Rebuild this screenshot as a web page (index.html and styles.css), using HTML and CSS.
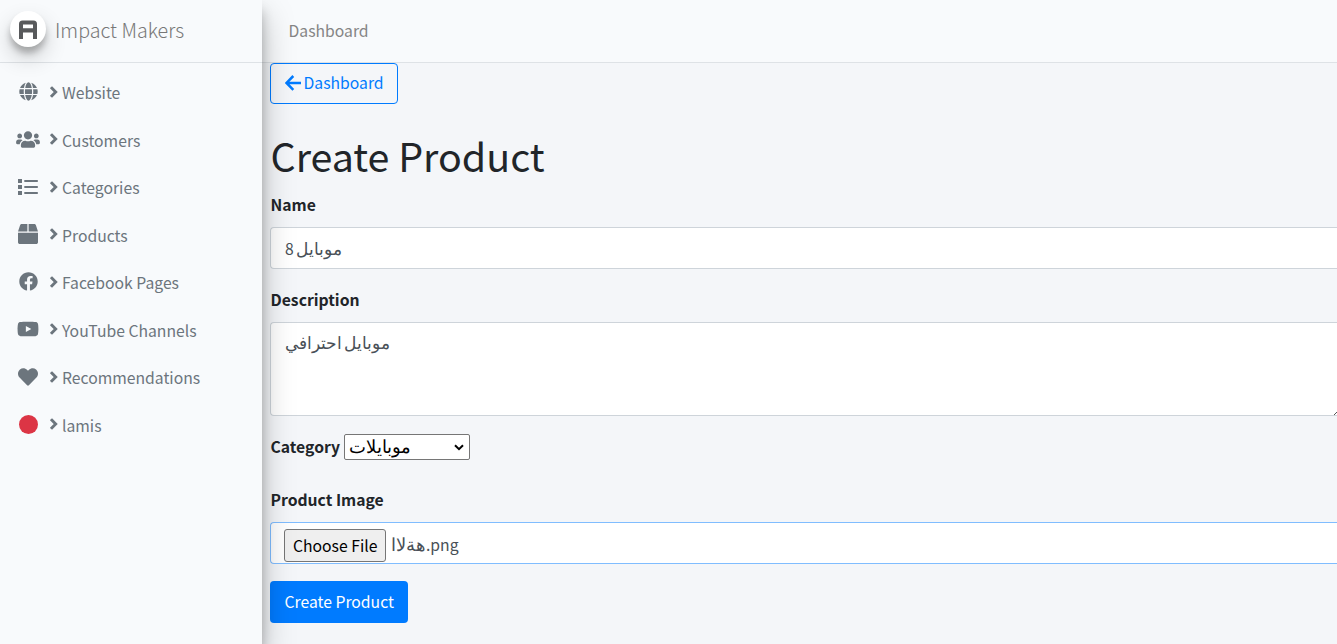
FILE: index.html
```html
<!DOCTYPE html>
<html lang="en">
<head>
<meta charset="utf-8">
<title>Create Product</title>
<link rel="stylesheet" href="styles.css">
</head>
<body>
<svg class="sprite" aria-hidden="true">
  <symbol id="chev" viewBox="0 0 8 14"><path d="M2 3.200 5.700 7 2 10.800" fill="none" stroke="currentColor" stroke-width="2.900" stroke-linecap="square"/></symbol>
</svg>
<div class="app">
  <aside class="sidebar">
    <a class="brand">
      <span class="logo"><svg viewBox="0 0 18 19"><path fill="#58595b" fill-rule="evenodd" d="M0 19V4Q0 .5 3.500 .5h11q3.500 0 3.500 3.500v15h-4v-6.500H4V19zM4 8.300h10V4.500H4z"/></svg></span>
      <span class="brand-name">Impact Makers</span>
    </a>
    <nav class="menu">
      <a class="item"><span class="icon"><svg width="19" height="19" viewBox="0 0 496 512"><path d="M336.500 160C322 70.700 287.800 8 248 8s-74 62.700-88.500 152h177zM152 256c0 22.200 1.200 43.500 3.300 64h185.300c2.100-20.500 3.300-41.800 3.300-64s-1.200-43.500-3.300-64H155.300c-2.100 20.500-3.300 41.800-3.300 64zm324.700-96c-28.600-67.900-86.500-120.400-158-141.600 24.400 33.800 41.200 84.700 50 141.600h108zM177.200 18.400C105.800 39.600 47.800 92.100 19.300 160h108c8.700-56.900 25.500-107.800 49.900-141.600zM487.400 192H372.700c2.100 21 3.300 42.500 3.300 64s-1.200 43-3.300 64h114.600c5.500-20.500 8.600-41.800 8.600-64s-3.100-43.500-8.500-64zM120 256c0-21.500 1.200-43 3.300-64H8.600C3.200 212.500 0 233.800 0 256s3.200 43.500 8.600 64h114.600c-2-21-3.200-42.500-3.200-64zm39.500 96c14.500 89.300 48.700 152 88.500 152s74-62.700 88.500-152h-177zm159.300 141.600c71.400-21.200 129.400-73.700 158-141.600h-108c-8.800 56.900-25.600 107.800-50 141.600zM19.300 352c28.600 67.900 86.500 120.400 158 141.600-24.400-33.800-41.200-84.700-50-141.600h-108z"/></svg></span><svg class="chev"><use href="#chev"/></svg><span class="text">Website</span></a>
      <a class="item"><span class="icon"><svg width="24" height="19" viewBox="0 0 640 512"><path d="M96 224c35.300 0 64-28.700 64-64s-28.700-64-64-64-64 28.700-64 64 28.700 64 64 64zm448 0c35.300 0 64-28.700 64-64s-28.700-64-64-64-64 28.700-64 64 28.700 64 64 64zm32 32h-64c-17.600 0-33.500 7.100-45.100 18.600 40.300 22.100 68.900 62 75.100 109.400h66c17.700 0 32-14.300 32-32v-32c0-35.300-28.700-64-64-64zm-256 0c61.900 0 112-50.100 112-112S381.900 32 320 32 208 82.100 208 144s50.100 112 112 112zm76.800 32h-8.300c-20.800 10-43.900 16-68.500 16s-47.600-6-68.500-16h-8.300C179.600 288 128 339.600 128 403.200V432c0 26.500 21.500 48 48 48h288c26.500 0 48-21.500 48-48v-28.800c0-63.600-51.600-115.200-115.200-115.200zm-223.700-13.400C161.500 263.100 145.600 256 128 256H64c-35.300 0-64 28.700-64 64v32c0 17.700 14.300 32 32 32h65.900c6.300-47.400 34.900-87.300 75.200-109.400z"/></svg></span><svg class="chev"><use href="#chev"/></svg><span class="text">Customers</span></a>
      <a class="item"><span class="icon"><svg width="20" height="16" viewBox="0 0 20 16"><path d="M0 0h4v4H0zM0 6h4v4H0zM0 12h4v4H0zM6.300 1h13.500v2H6.300zM6.300 7h13.500v2H6.300zM6.300 13h13.500v2H6.300z"/></svg></span><svg class="chev"><use href="#chev"/></svg><span class="text">Categories</span></a>
      <a class="item"><span class="icon"><svg width="20" height="20" viewBox="0 0 512 512"><path d="M509.500 184.600L458.900 32.800C452.400 13.200 434.100 0 413.400 0H272v192h238.700c-.4-2.500-.4-5-1.200-7.400zM240 0H98.600c-20.700 0-39 13.200-45.500 32.800L2.500 184.600c-.8 2.400-.8 4.900-1.200 7.400H240V0zM0 224v240c0 26.500 21.500 48 48 48h416c26.500 0 48-21.500 48-48V224H0z"/></svg></span><svg class="chev"><use href="#chev"/></svg><span class="text">Products</span></a>
      <a class="item"><span class="icon"><svg width="19" height="19" viewBox="0 0 512 512"><path d="M504 256C504 119 393 8 256 8S8 119 8 256c0 123.780 90.690 226.380 209.250 245V327.690h-63V256h63v-54.640c0-62.150 37-96.480 93.670-96.480 27.140 0 55.520 4.840 55.520 4.840v61h-31.280c-30.800 0-40.410 19.120-40.410 38.730V256h68.780l-11 71.690h-57.780V501C413.310 482.380 504 379.780 504 256z"/></svg></span><svg class="chev"><use href="#chev"/></svg><span class="text">Facebook Pages</span></a>
      <a class="item"><span class="icon"><svg width="22" height="20" viewBox="0 0 576 512"><path d="M549.655 124.083c-6.281-23.650-24.787-42.276-48.284-48.597C458.781 64 288 64 288 64S117.220 64 74.629 75.486c-23.497 6.322-42.003 24.947-48.284 48.597-11.412 42.867-11.412 132.305-11.412 132.305s0 89.438 11.412 132.305c6.281 23.650 24.787 41.500 48.284 47.821C117.220 448 288 448 288 448s170.780 0 213.371-11.486c23.497-6.321 42.003-24.171 48.284-47.821 11.412-42.867 11.412-132.305 11.412-132.305s0-89.438-11.412-132.305zm-317.510 213.508V175.185l142.739 81.205-142.739 81.201z"/></svg></span><svg class="chev"><use href="#chev"/></svg><span class="text">YouTube Channels</span></a>
      <a class="item"><span class="icon"><svg width="20" height="20" viewBox="0 0 512 512"><path d="M462.300 62.600C407.500 15.900 326 24.300 275.700 76.200L256 96.500l-19.700-20.300C186.100 24.300 104.500 15.900 49.700 62.600c-62.800 53.600-66.100 149.800-9.900 207.900l193.500 199.800c12.500 12.900 32.800 12.900 45.300 0l193.500-199.800c56.300-58.100 53-154.300-9.800-207.900z"/></svg></span><svg class="chev"><use href="#chev"/></svg><span class="text">Recommendations</span></a>
      <a class="item"><span class="icon"><span class="dot"></span></span><svg class="chev"><use href="#chev"/></svg><span class="text">lamis</span></a>
    </nav>
  </aside>
  <main class="main">
    <header class="topbar"><a>Dashboard</a></header>
    <form class="form">
      <a class="back"><svg width="16" height="16" viewBox="0 0 16 16"><path d="M8.300 1 1.500 7.900l6.800 6.900M2 7.900h14" fill="none" stroke="currentColor" stroke-width="2.500"/></svg><span class="text">Dashboard</span></a>
      <h1>Create Product</h1>
      <label class="label">Name</label>
      <div class="control name"><span class="ar">موبايل <span class="num">8</span></span></div>
      <label class="label desc-label">Description</label>
      <div class="control area"><span class="ar">موبايل احترافي</span><svg class="grip" viewBox="0 0 3 3"><path d="M0 2h1v1H0zM1 1h1v1H1zM2 0h1v1H2z" fill="#555"/></svg></div>
      <div class="category"><span class="label">Category</span>
        <div class="select"><span class="ar ar-wide">موبايلات</span><svg width="10" height="7" viewBox="0 0 10 7"><path d="m1 1.200 4 4 4-4" fill="none" stroke="#000" stroke-width="2"/></svg></div>
      </div>
      <label class="label image-label">Product Image</label>
      <div class="control file"><span class="choose">Choose File</span><span class="filename"><bdi class="ar ar-wide">هةلاا</bdi><span>.png</span></span></div>
      <button type="button" class="submit">Create Product</button>
    </form>
  </main>
</div>
</body>
</html>
```
FILE: styles.css
```css
* { box-sizing: border-box; }
body {
  margin: 0;
  height: 644px;
  overflow: hidden;
  background: #f4f6f9;
  color: #212529;
  font: 15.720px/26px "Noto Sans CJK SC", sans-serif;
}
svg { display: block; flex: none; }
.sprite { display: none; }
.app { display: flex; height: 644px; }
.sidebar {
  width: 262px;
  flex: none;
  z-index: 1;
  background: #f8fafc;
  color: #6c757d;
  box-shadow: 0 15px 31px rgba(0,0,0,.25), 0 11px 11px rgba(0,0,0,.22);
}
.brand {
  display: flex;
  align-items: center;
  height: 63px;
  padding: 0 0 4px 10px;
  border-bottom: 1px solid #dee2e6;
}
.logo {
  display: flex;
  align-items: center;
  justify-content: center;
  width: 36px;
  height: 36px;
  border-radius: 50%;
  background: #fff;
  box-shadow: 0 11px 22px rgba(0,0,0,.19), 0 6px 6px rgba(0,0,0,.23);
}
.logo svg { width: 18px; height: 19px; }
.brand-name { margin-left: 9px; padding-top: 1px; font-size: 19.700px; font-weight: 300; color: #777; }
.menu { padding-top: 5px; }
.item { display: flex; align-items: center; height: 47.540px; }
.icon { display: flex; justify-content: center; width: 56px; }
.icon svg { fill: currentColor; }
.dot { width: 19px; height: 19px; border-radius: 50%; background: #dc3545; }
.chev { width: 8px; height: 14px; margin: 0 4px 0 -6px; }
.item .text { padding-top: 2.500px; }
.main { flex: 1; min-width: 0; }
.topbar {
  height: 63px;
  padding: 18px 0 0 26.500px;
  border-bottom: 1px solid #dee2e6;
  background: #f8fafc;
  color: #858585;
}
.form { display: flex; flex-direction: column; align-items: flex-start; padding-left: 8px; }
.back {
  display: flex;
  align-items: center;
  gap: 3px;
  width: 128px;
  height: 41px;
  padding: 0 0 2px 13.500px;
  border: 1px solid #007bff;
  border-radius: 4px;
  color: #007bff;
}
.back .text { padding-top: 1px; }
h1 { margin: 24px 0 0 .5px; height: 56px; font-size: 39.400px; line-height: 53px; font-weight: 400; }
.label { display: block; height: 26px; line-height: 26px; padding-left: .5px; font-weight: 700; }
.form > .label { margin-top: 8px; }
.control {
  align-self: stretch;
  height: 42px;
  border: 1px solid #ced4da;
  border-right: 0;
  border-radius: 4px 0 0 4px;
  background: #fff;
  color: #495057;
  padding: 8px 14px;
}
.name { margin-top: 9px; }
.ar { font-family: "DejaVu Sans", sans-serif; font-weight: 200; font-size: 16.500px; word-spacing: -3px; }
.ar-wide { font-size: 18px; }
.num { font: 400 15.700px "Noto Sans CJK SC", sans-serif; }
.form > .desc-label { margin-top: 18px; }
.area { position: relative; height: 94px; margin-top: 9px; padding-top: 7px; }
.grip { position: absolute; right: 0; bottom: 0; width: 3px; height: 3px; }
.category { display: flex; gap: 4px; margin-top: 18px; }
.select {
  display: flex;
  align-items: center;
  justify-content: space-between;
  width: 126px;
  height: 26px;
  padding: 0 5px 0 4px;
  border: 1px solid #767676;
  border-radius: 2px;
  background: #fff;
  color: #000;
}
.form > .image-label { margin-top: 27px; }
.file { display: flex; margin-top: 9px; padding: 6px 13px; border-color: #80bdff; }
.choose {
  width: 102px;
  height: 33px;
  padding: 3px 0 0 8px;
  border: 1px solid #767676;
  border-radius: 3px;
  background: #efefef;
  color: #000;
}
.filename { margin-left: 5px; padding-top: 3px; }
.submit {
  width: 138px;
  height: 42px;
  margin-top: 17px;
  padding: 0 0 0 14.500px;
  border: 0;
  border-radius: 4px;
  background: #007bff;
  color: #fff;
  font: inherit;
  text-align: left;
}
```
